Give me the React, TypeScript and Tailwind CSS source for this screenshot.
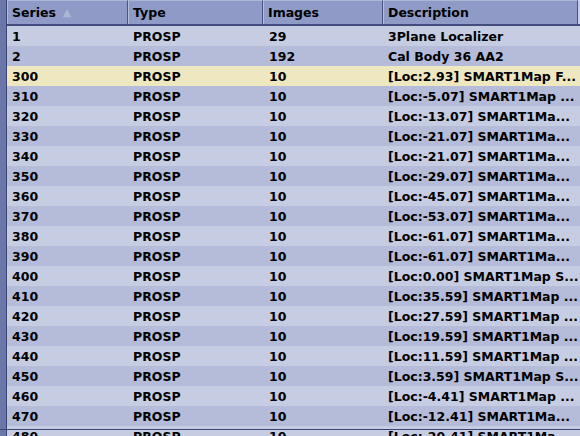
const rows: [string, string, string, string][] = [
    ["1", "PROSP", "29", "3Plane Localizer"],
    ["2", "PROSP", "192", "Cal Body 36 AA2"],
    ["300", "PROSP", "10", "[Loc:2.93] SMART1Map F..."],
    ["310", "PROSP", "10", "[Loc:-5.07] SMART1Map ..."],
    ["320", "PROSP", "10", "[Loc:-13.07] SMART1Ma..."],
    ["330", "PROSP", "10", "[Loc:-21.07] SMART1Ma..."],
    ["340", "PROSP", "10", "[Loc:-21.07] SMART1Ma..."],
    ["350", "PROSP", "10", "[Loc:-29.07] SMART1Ma..."],
    ["360", "PROSP", "10", "[Loc:-45.07] SMART1Ma..."],
    ["370", "PROSP", "10", "[Loc:-53.07] SMART1Ma..."],
    ["380", "PROSP", "10", "[Loc:-61.07] SMART1Ma..."],
    ["390", "PROSP", "10", "[Loc:-61.07] SMART1Ma..."],
    ["400", "PROSP", "10", "[Loc:0.00] SMART1Map S..."],
    ["410", "PROSP", "10", "[Loc:35.59] SMART1Map ..."],
    ["420", "PROSP", "10", "[Loc:27.59] SMART1Map ..."],
    ["430", "PROSP", "10", "[Loc:19.59] SMART1Map ..."],
    ["440", "PROSP", "10", "[Loc:11.59] SMART1Map ..."],
    ["450", "PROSP", "10", "[Loc:3.59] SMART1Map S..."],
    ["460", "PROSP", "10", "[Loc:-4.41] SMART1Map ..."],
    ["470", "PROSP", "10", "[Loc:-12.41] SMART1Ma..."],
    ["480", "PROSP", "10", "[Loc:-20.41] SMART1Ma..."],
]

const HeaderCell = ({ title, className, sorted }: { title: string; className: string; sorted?: boolean }) => (
    <div className={`${className} h-full flex items-center pl-[4px] pt-[2px] bg-[#8f9ac6] border-l border-l-[#b4bcdc] border-r border-r-[#4a5382] border-t border-t-[#aeb6d8]`}>
        <span>{title}</span>
        {sorted && <span className="ml-[7px] text-[11px] text-[#aeb6d8]">▲</span>}
    </div>
)

const App = () => {
    return (
        <div className="relative w-[580px] h-[436px] overflow-hidden flex bg-[#c6cce2] text-black font-bold text-[12.5px] font-['DejaVu_Sans',sans-serif]">
            {/* left frame strip */}
            <div className="w-[7px] shrink-0 bg-[#6b77a8] border-r border-r-[#3d4674]" />

            <div className="flex-1 flex flex-col min-w-0">
                {/* header */}
                <div className="flex h-[26px] shrink-0 border-b-2 border-b-[#434c7c] pr-[2px] bg-[#c6cce2]">
                    <HeaderCell title="Series" className="w-[121px]" sorted />
                    <HeaderCell title="Type" className="w-[135px]" />
                    <HeaderCell title="Images" className="w-[120px]" />
                    <HeaderCell title="Description" className="flex-1" />
                </div>

                {/* rows */}
                {rows.map((r, i) => (
                    <div
                        key={r[0]}
                        className={`flex h-[20px] shrink-0 items-center pt-[3px] whitespace-nowrap ${
                            r[0] === "300" ? "bg-[#efe7bf]" : i % 2 === 0 ? "bg-[#c6cce2]" : "bg-[#b4bcd9]"
                        }`}
                    >
                        <div className="w-[121px] pl-[5px]">{r[0]}</div>
                        <div className="w-[135px] pl-[5px]">{r[1]}</div>
                        <div className="w-[120px] pl-[6px]">{r[2]}</div>
                        <div className="flex-1 pl-[5px] overflow-hidden">{r[3]}</div>
                    </div>
                ))}
            </div>

            {/* bottom frame edge */}
            <div className="absolute left-0 right-0 top-[429px] h-[1px] bg-[#3d4674]" />
        </div>
    )
}

export default App
